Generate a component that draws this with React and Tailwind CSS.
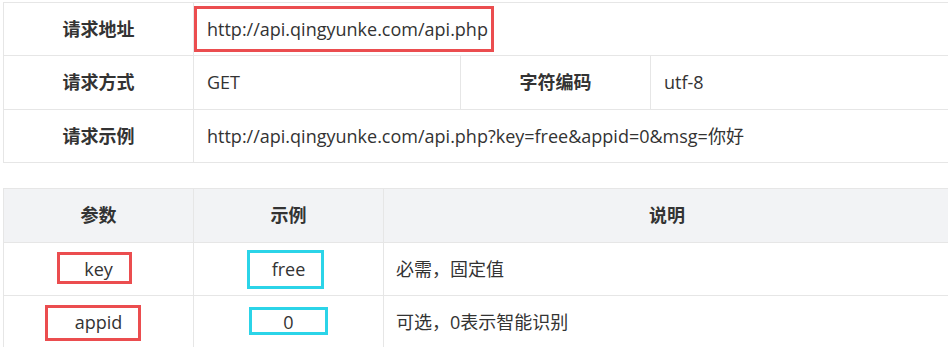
import React from "react";

const font = { fontFamily: '"Open Sans", "Noto Sans CJK SC", sans-serif' };

function Box({ color, className }) {
  return (
    <div
      className={`absolute border-[3px] pointer-events-none ${color} ${className}`}
    />
  );
}

export default function App() {
  return (
    <div
      className="w-[948px] h-[347px] overflow-hidden bg-white text-[#333] text-[18px]"
      style={font}
    >
      <div className="w-[948px] ml-[3px] mt-[2px] border border-[#e6e6e6]">
        <div className="flex h-[53px] border-b border-[#e6e6e6]">
          <div className="w-[190px] shrink-0 border-r border-[#e6e6e6] flex items-center justify-center font-bold">
            请求地址
          </div>
          <div className="relative flex-1 flex items-center pl-[13px]">
            <Box color="border-[#eb4d4f]" className="left-0 top-[3px] w-[300px] h-[46px]" />
            http://api.qingyunke.com/api.php
          </div>
        </div>
        <div className="flex h-[54px] border-b border-[#e6e6e6]">
          <div className="w-[190px] shrink-0 border-r border-[#e6e6e6] flex items-center justify-center font-bold">
            请求方式
          </div>
          <div className="w-[267px] shrink-0 border-r border-[#e6e6e6] flex items-center pl-[13px]">
            GET
          </div>
          <div className="w-[190px] shrink-0 border-r border-[#e6e6e6] flex items-center justify-center font-bold">
            字符编码
          </div>
          <div className="flex-1 flex items-center pl-[13px]">utf-8</div>
        </div>
        <div className="flex h-[52px]">
          <div className="w-[190px] shrink-0 border-r border-[#e6e6e6] flex items-center justify-center font-bold">
            请求示例
          </div>
          <div className="flex-1 flex items-center pl-[13px]">
            http://api.qingyunke.com/api.php?key=free&amp;appid=0&amp;msg=你好
          </div>
        </div>
      </div>

      <div className="w-[948px] ml-[3px] mt-[25px] border border-[#e6e6e6]">
        <div className="flex h-[54px] bg-[#f2f3f5] border-b border-[#e6e6e6] font-bold">
          <div className="w-[190px] shrink-0 border-r border-[#e6e6e6] flex items-center justify-center">
            参数
          </div>
          <div className="w-[190px] shrink-0 border-r border-[#e6e6e6] flex items-center justify-center">
            示例
          </div>
          <div className="flex-1 flex items-center justify-center">说明</div>
        </div>
        <div className="flex h-[53px] border-b border-[#e6e6e6]">
          <div className="relative w-[190px] shrink-0 border-r border-[#e6e6e6] flex items-center justify-center">
            <Box color="border-[#eb4d4f]" className="left-[53px] top-[9px] w-[75px] h-[32px]" />
            key
          </div>
          <div className="relative w-[190px] shrink-0 border-r border-[#e6e6e6] flex items-center justify-center">
            <Box color="border-[#2bd4e8]" className="left-[53px] top-[7px] w-[77px] h-[39px]" />
            free
          </div>
          <div className="flex-1 flex items-center pl-[12px]">必需，固定值</div>
        </div>
        <div className="flex h-[60px]">
          <div className="relative w-[190px] shrink-0 border-r border-[#e6e6e6] flex items-start justify-center pt-[13px]">
            <Box color="border-[#eb4d4f]" className="left-[41px] top-[9px] w-[96px] h-[36px]" />
            appid
          </div>
          <div className="relative w-[190px] shrink-0 border-r border-[#e6e6e6] flex items-start justify-center pt-[13px]">
            <Box color="border-[#2bd4e8]" className="left-[55px] top-[11px] w-[79px] h-[28px]" />
            0
          </div>
          <div className="flex-1 flex items-start pl-[12px] pt-[13px]">可选，0表示智能识别</div>
        </div>
      </div>
    </div>
  );
}
